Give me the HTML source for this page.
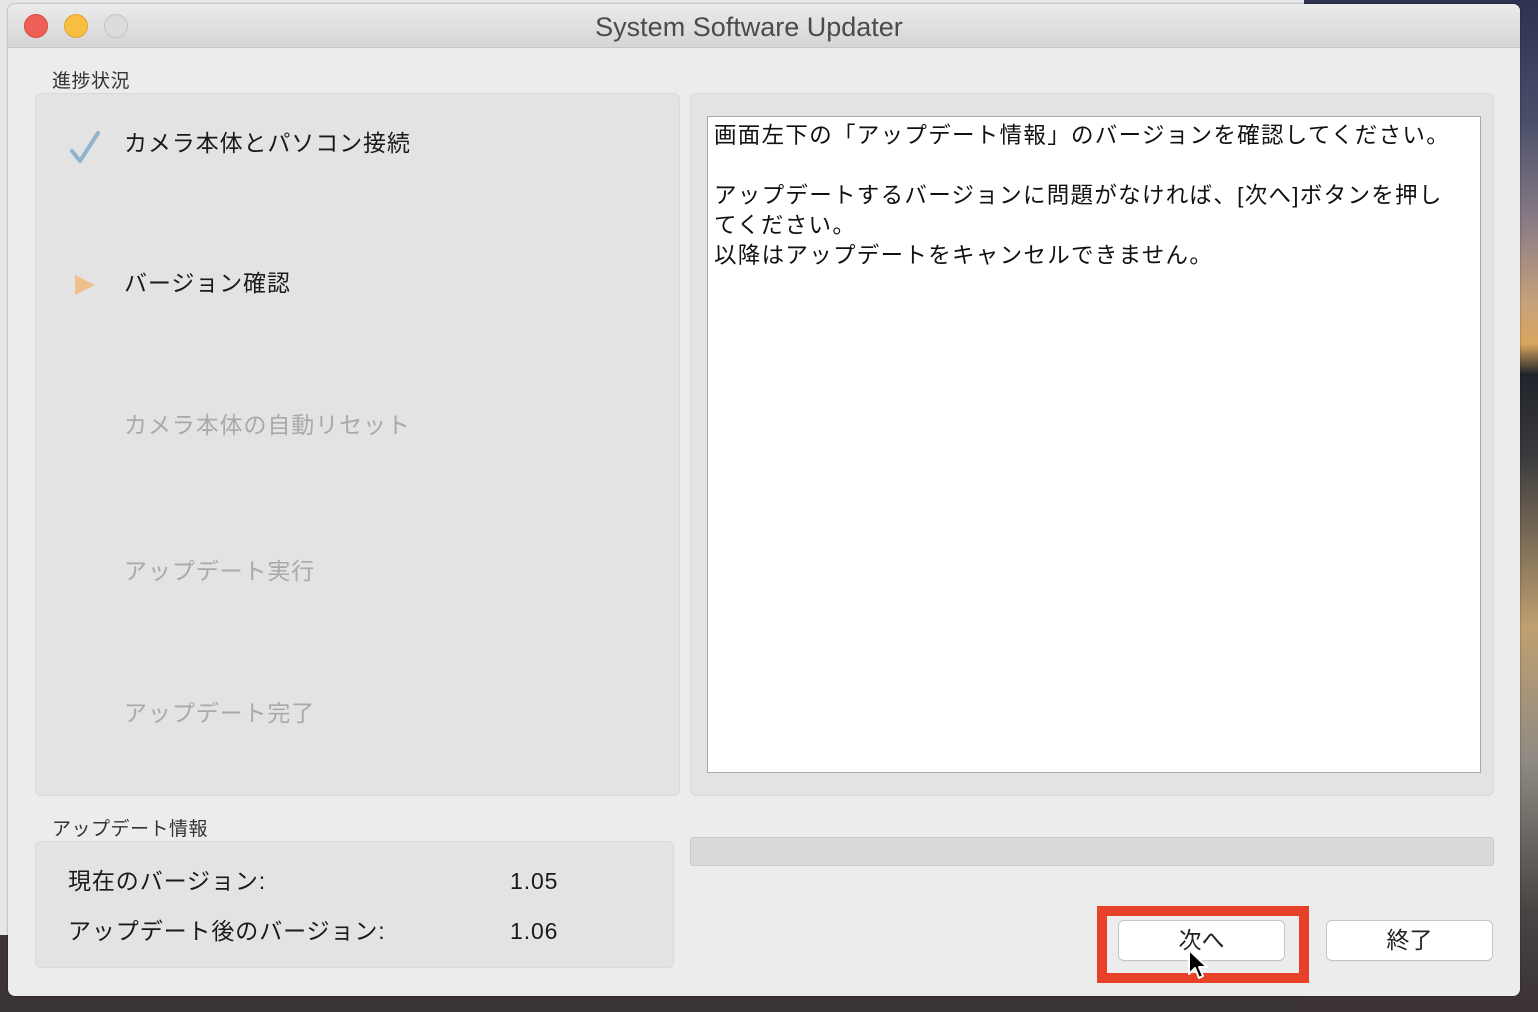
<!DOCTYPE html>
<html><head><meta charset="utf-8"><style>
*{margin:0;padding:0;box-sizing:border-box}
body{width:1538px;height:1012px;overflow:hidden;position:relative;background:#3a3435;font-family:"Liberation Sans","Noto Sans CJK JP",sans-serif;color:#1a1a1a}
.abs{position:absolute}
.bgl{left:0;top:0;width:1304px;height:935px;background:#e6e6e6}
.bgr{left:1304px;top:0;width:234px;height:1012px;background:linear-gradient(#2c3250 0%,#4a4f6a 12%,#8a7c86 22%,#c7a27a 30%,#d8a55e 34%,#20242a 37%,#3a3a3e 45%,#c0a070 62%,#8f8a82 75%,#4a4444 90%,#3a3234 100%)}
.win{left:8px;top:4px;width:1512px;height:992px;background:#ececec;border-radius:7px;overflow:hidden;box-shadow:0 0 2px rgba(0,0,0,.4)}
.tb{left:0;top:0;width:1512px;height:44px;background:linear-gradient(#ebebeb,#d5d5d5);border-bottom:1px solid #c4c4c4}
.title{left:0;top:8px;width:1482px;text-align:center;font-size:27px;color:#4b4b4b}
.tl{width:24px;height:24px;border-radius:50%;top:10px}
.lbl{font-size:19px;color:#333;letter-spacing:0.5px}
.panel{background:#e3e3e3;border:1px solid #dadada;border-radius:6px}
.step{left:116px;font-size:23px;line-height:30px;letter-spacing:0.9px}
.dis{color:#a9a9a9}
.msg{font-size:22.5px;line-height:30px;color:#111;letter-spacing:1.3px}
.btn{background:#fff;border-radius:5px;box-shadow:0 0 0 1px #c6c6c6,0 1px 1px rgba(0,0,0,.2);text-align:center;font-size:23px;line-height:38px;color:#222}
</style></head><body>
<div class="abs bgl"></div>
<div class="abs bgr"></div>
<div class="abs win">
  <div class="abs tb"></div>
  <div class="abs title">System Software Updater</div>
  <div class="abs tl" style="left:16px;background:#ee5f58;border:1px solid #d9463f"></div>
  <div class="abs tl" style="left:56px;background:#f8be3f;border:1px solid #dea237"></div>
  <div class="abs tl" style="left:96px;background:#dcdcdc;border:1px solid #c4c4c4"></div>

  <div class="abs lbl" style="left:44px;top:62px">進捗状況</div>
  <div class="abs panel" style="left:27px;top:89px;width:645px;height:703px"></div>
  <svg class="abs" style="left:60px;top:125px" width="36" height="36" viewBox="0 0 36 36"><path d="M4 22 L12 32 L30 4" fill="none" stroke="#8fb3cc" stroke-width="4" stroke-linecap="round" stroke-linejoin="round"/></svg>
  <div class="abs step" style="top:124px">カメラ本体とパソコン接続</div>
  <svg class="abs" style="left:64px;top:268px" width="26" height="26" viewBox="0 0 26 26"><path d="M3 3 L23 13 L3 23Z" fill="#f0bf8e"/></svg>
  <div class="abs step" style="top:264px">バージョン確認</div>
  <div class="abs step dis" style="top:406px">カメラ本体の自動リセット</div>
  <div class="abs step dis" style="top:552px">アップデート実行</div>
  <div class="abs step dis" style="top:694px">アップデート完了</div>

  <div class="abs panel" style="left:682px;top:89px;width:804px;height:703px"></div>
  <div class="abs" style="left:699px;top:112px;width:774px;height:657px;background:#fff;border:1px solid #a9a9a9"></div>
  <div class="abs msg" style="left:706px;top:117px;width:765px">画面左下の「アップデート情報」のバージョンを確認してください。<br><br>アップデートするバージョンに問題がなければ、[次へ]ボタンを押し<br>てください。<br>以降はアップデートをキャンセルできません。</div>

  <div class="abs lbl" style="left:44px;top:810px">アップデート情報</div>
  <div class="abs panel" style="left:27px;top:837px;width:639px;height:127px"></div>
  <div class="abs step" style="left:60px;top:862px">現在のバージョン:</div>
  <div class="abs step" style="left:502px;top:862px">1.05</div>
  <div class="abs step" style="left:60px;top:912px">アップデート後のバージョン:</div>
  <div class="abs step" style="left:502px;top:912px">1.06</div>

  <div class="abs" style="left:682px;top:833px;width:804px;height:29px;background:#dadada;border:1px solid #c8c8c8;border-radius:3px"></div>

  <div class="abs btn" style="left:1111px;top:917px;width:165px;height:39px">次へ</div>
  <div class="abs btn" style="left:1319px;top:917px;width:165px;height:39px">終了</div>
  <div class="abs" style="left:1089px;top:902px;width:212px;height:77px;border:10px solid #e8412a"></div>
  <svg class="abs" style="left:1179px;top:944px" width="24" height="34" viewBox="0 0 24 34"><path d="M2 2 L2 26 L8 20 L12 30 L16 28 L12 19 L20 19Z" fill="#000" stroke="#fff" stroke-width="2" stroke-linejoin="round"/></svg>
</div>
</body></html>
